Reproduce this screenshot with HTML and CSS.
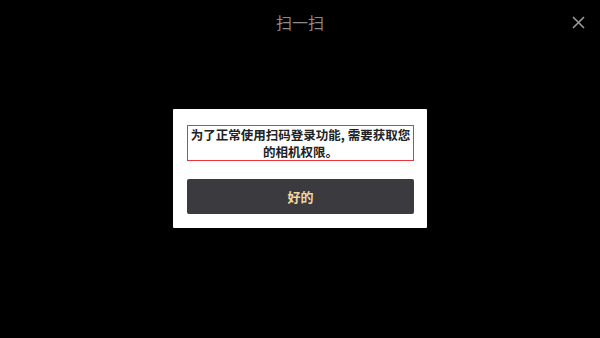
FILE: index.html
```html
<!DOCTYPE html>
<html lang="zh-CN">
<head>
    <meta charset="UTF-8">
    <meta name="viewport" content="width=device-width, initial-scale=1.0">
    <title>扫一扫</title>
    <link rel="stylesheet" href="styles.css">
</head>
<body>
    <div class="scan-page">
        <div class="top-bar">
            <div class="title">扫一扫</div>
            <button class="close-btn" aria-label="关闭">
                <svg width="13" height="13" viewBox="0 0 13 13">
                    <path d="M1 1 L12 12 M12 1 L1 12" stroke="#9a9a9a" stroke-width="1.6" fill="none"/>
                </svg>
            </button>
        </div>

        <div class="dialog-wrap">
            <div class="dialog">
                <p class="dialog-text">为了正常使用扫码登录功能, 需要获取您的相机权限。</p>
                <button class="ok-btn">好的</button>
            </div>
        </div>
    </div>
</body>
</html>
```

FILE: styles.css
```css
body {
    margin: 0;
    background: #000;
    font-family: "Noto Sans CJK SC", "Noto Sans", sans-serif;
}
.scan-page {
    width: 600px;
    height: 338px;
    display: flex;
    flex-direction: column;
}
.top-bar {
    position: relative;
    height: 44px;
    display: flex;
    align-items: center;
    justify-content: center;
}
.title {
    color: #8c8c8c;
    font-size: 16px;
    line-height: 20px;
    margin-top: 0;
}
.close-btn {
    position: absolute;
    right: 15px;
    top: 16px;
    background: none;
    border: none;
    padding: 0;
    width: 13px;
    height: 13px;
    display: flex;
}
.dialog-wrap {
    display: flex;
    justify-content: center;
    padding-top: 65px;
}
.dialog {
    width: 227px;
    background: #fff;
    padding: 16px 13px 14px 14px;
    border-radius: 1px;
}
.dialog-text {
    margin: 0;
    border: 1px solid #e8353d;
    padding: 0 2px;
    font-size: 12.5px;
    font-weight: bold;
    line-height: 17px;
    color: #222;
    text-align: center;
}
.ok-btn {
    display: block;
    width: 100%;
    height: 35px;
    margin-top: 18px;
    background: #3a3a3f;
    color: #f0d7a4;
    border: none;
    border-radius: 2px;
    font-family: inherit;
    font-size: 13px;
    font-weight: bold;
}
```
